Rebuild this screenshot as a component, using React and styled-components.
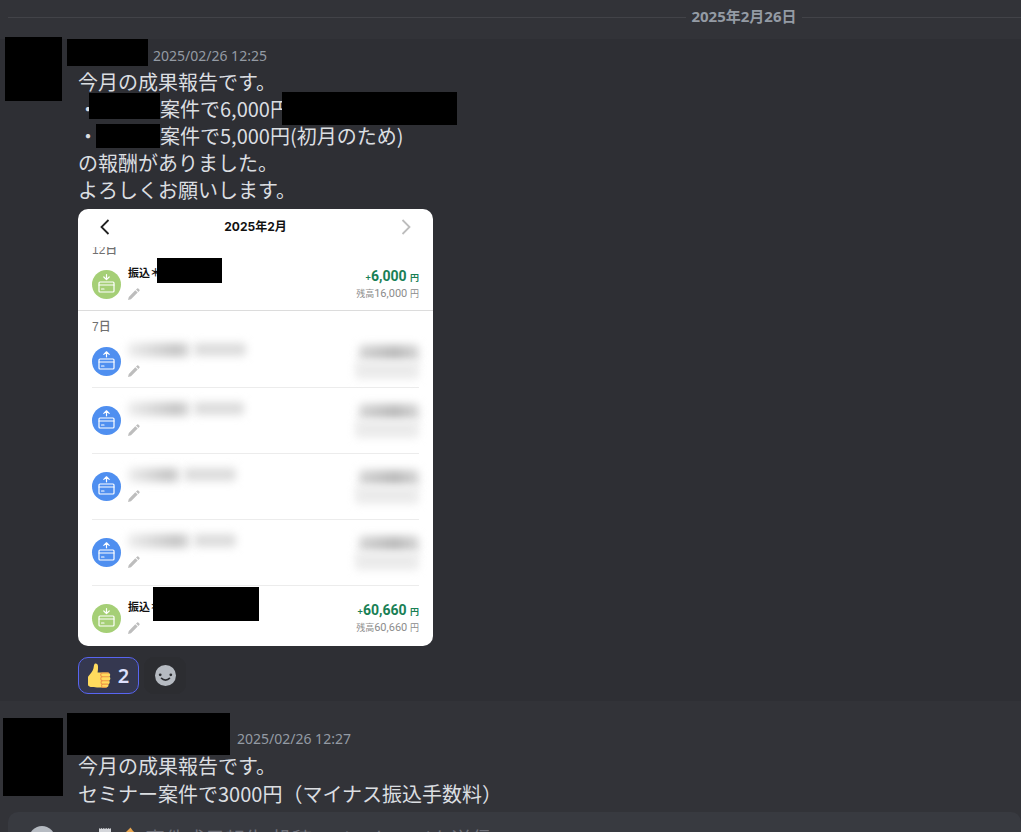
import React from "react";
import styled, { createGlobalStyle } from "styled-components";

const GlobalStyle = createGlobalStyle`
  *, *::before, *::after { box-sizing: border-box; }
  body {
    margin: 0;
    background: #323338;
    color: #dbdee1;
    font-family: "Noto Sans CJK JP", "Noto Sans", sans-serif;
    overflow: hidden;
  }
  p, h2, h3, ul { margin: 0; padding: 0; font-weight: inherit; }
  ul { list-style: none; }
`;

const Page = styled.div`
  height: 100vh;
  overflow: hidden;
`;

const Feed = styled.main`
  height: calc(100vh - 20px);
  overflow: hidden;
`;

const DateDivider = styled.div`
  display: flex;
  align-items: center;
  height: 39px;
  padding: 0 0 5px 8px;
`;

const Rule = styled.span`
  flex: ${(p) => p.$share} 1 0;
  height: 1px;
  background: #424348;
`;

const DividerDate = styled.time`
  padding: 0 5px 2px;
  color: #949ba4;
  font: 700 15px/20px "Noto Sans", "Noto Sans CJK JP", sans-serif;
`;

const Message = styled.article`
  position: relative;
  padding: 0 16px 7px 78px;
  background: ${(p) => (p.$active ? "#2e2f34" : "transparent")};
  margin-top: ${(p) => p.$gap || 0}px;
`;

const Avatar = styled.span`
  position: absolute;
  left: ${(p) => p.$left}px;
  top: ${(p) => p.$top}px;
  width: ${(p) => p.$w}px;
  height: ${(p) => p.$h}px;
  background: #000;
`;

const MessageHeader = styled.header`
  display: flex;
  align-items: flex-end;
  gap: ${(p) => p.$gap}px;
  height: ${(p) => p.$h}px;
  margin-left: -11px;
`;

const Redacted = styled.span`
  display: block;
  flex: none;
  align-self: ${(p) => p.$align || "center"};
  width: ${(p) => p.$w}px;
  height: ${(p) => p.$h}px;
  margin: ${(p) => p.$m || "0"};
  background: #000;
  position: relative;
`;

const Timestamp = styled.time`
  padding-bottom: 2px;
  color: #949ba4;
  font: 400 14px/20px "Noto Sans", sans-serif;
`;

const Line = styled.p`
  display: flex;
  align-items: center;
  height: ${(p) => (p.$loose ? 28 : 27)}px;
  font-size: 20px;
  line-height: 27px;
  white-space: nowrap;
`;

const Attachment = styled.section`
  width: 355px;
  max-width: 100%;
  margin-top: 6px;
  border-radius: 10px;
  overflow: hidden;
  background: #fff;
  color: #111;
`;

const MonthBar = styled.header`
  display: flex;
  align-items: center;
  justify-content: space-between;
  height: 38px;
  padding: 0 22px 3px;
`;

const MonthTitle = styled.h2`
  font: 700 12px/18px Inter, "Noto Sans CJK JP", sans-serif;
`;

const IconButton = styled.button`
  display: flex;
  padding: 0;
  border: 0;
  background: none;
  color: ${(p) => (p.$muted ? "#bdbdbd" : "#222")};
`;

const DayLabel = styled.h3`
  display: flex;
  align-items: ${(p) => (p.$cut ? "flex-end" : "center")};
  height: ${(p) => (p.$cut ? 9 : 16)}px;
  margin: ${(p) => (p.$cut ? "0 14px -4px" : "8px 14px -6px")};
  overflow: hidden;
  color: #707070;
  font: 500 12px/${(p) => (p.$cut ? 12 : 16)}px "Liberation Sans", "Noto Sans CJK JP", sans-serif;
`;

const DayList = styled.ul`
  padding: 0 14px;
  border-bottom: ${(p) => (p.$ruled ? "1px solid #dcdcdc" : "0")};
`;

const Entry = styled.li`
  display: flex;
  align-items: center;
  gap: 7px;
  padding: 18px 0 ${(p) => p.$below}px;
  border-bottom: ${(p) => (p.$last ? "0" : "1px solid #ececec")};
`;

const Badge = styled.span`
  display: flex;
  flex: none;
  width: 29px;
  height: 29px;
  border-radius: 50%;
  background: ${(p) => (p.$incoming ? "#a5cf76" : "#4f8ff0")};
`;

const Details = styled.div`
  display: flex;
  flex-direction: column;
  justify-content: space-between;
  flex: 1;
  height: 35px;
  margin: -5px 0 -1px;
`;

const Payee = styled.div`
  display: flex;
  align-items: center;
  height: 15px;
  font: 700 11px/15px "Noto Sans CJK JP", sans-serif;
`;

const Amounts = styled.div`
  display: flex;
  flex-direction: column;
  align-items: flex-end;
  margin: -3px 0;
`;

const Amount = styled.strong`
  color: #188055;
  font: 700 14px/18px Roboto, sans-serif;
  small { font: 700 9px/9px "Noto Sans CJK JP", sans-serif; }
`;

const Balance = styled.span`
  color: #8c8c8c;
  font: 400 11px/17px Roboto, sans-serif;
  small { font: 400 9px/9px "Noto Sans CJK JP", sans-serif; }
`;

const Smudge = styled.span`
  display: block;
  width: ${(p) => p.$w}px;
  height: ${(p) => p.$h}px;
  margin-left: ${(p) => p.$x || 0}px;
  background: ${(p) => p.$tone};
  border-radius: 4px;
  filter: blur(4px);
`;

const Reactions = styled.div`
  display: flex;
  gap: 5px;
  margin-top: 11px;
`;

const Reaction = styled.button`
  display: flex;
  align-items: center;
  justify-content: center;
  gap: 7px;
  width: ${(p) => (p.$mine ? 61 : 42)}px;
  height: 37px;
  padding: 0;
  border: 1px solid ${(p) => (p.$mine ? "#5865f2" : "#2c2d31")};
  border-radius: 10px;
  background: ${(p) => (p.$mine ? "#353850" : "#2c2d31")};
  color: #dee0fc;
  font: 600 20px/24px "Noto Sans", sans-serif;
`;

const Composer = styled.form`
  display: flex;
  align-items: center;
  gap: 42px;
  height: 54px;
  margin: 0 0 0 8px;
  padding: 0 16px 0 21px;
  border-radius: 10px 10px 0 0;
  background: #383a40;
`;

const Attach = styled.button`
  display: flex;
  flex: none;
  padding: 0;
  border: 0;
  background: none;
`;

const Field = styled.label`
  display: flex;
  align-items: center;
  flex: 1;
  gap: 4px;
`;

const MessageInput = styled.input`
  flex: 1;
  min-width: 0;
  padding: 0;
  border: 0;
  outline: 0;
  background: none;
  color: #dbdee1;
  font: 400 20px/28px "Noto Sans CJK JP", sans-serif;
  &::placeholder { color: #6d6f78; opacity: 1; }
`;

const Chevron = ({ back }) => (
  <svg width="10" height="16" viewBox="0 0 10 16" fill="none" stroke="currentColor" strokeWidth="1.8">
    <path d={back ? "M8.5 1 1.5 8l7 7" : "M1.5 1l7 7-7 7"} />
  </svg>
);

const CardIcon = ({ incoming }) => (
  <svg width="29" height="29" viewBox="0 0 29 29" fill="none" stroke="#fff" strokeWidth="1.2" strokeLinecap="round" strokeLinejoin="round">
    <path d={incoming ? "M14.5 4.5v5M11.8 7l2.7 2.6L17.2 7" : "M14.5 9.8V5M11.8 7.4l2.7-2.6 2.7 2.6"} />
    <rect x="7" y="12" width="15" height="10" rx="1" />
    <path d="M7 15h15M9.5 19h2.5" />
  </svg>
);

const Pencil = () => (
  <svg width="12" height="12" viewBox="0 0 12 12" fill="#bdbdbd">
    <path d="M0 12 .8 9 7.300 2.300 9.700 4.600 3 11.200zM8 1.600 9.200.5q.5-.5 1.100 0l1.200 1.200q.5.500 0 1L10.400 3.900z" />
  </svg>
);

const ThumbsUp = () => (
  <svg width="23" height="25" viewBox="0 0 24 26">
    <path fill="#ffdb5e" d="M7 .8c1.8-.7 3.2.3 3.4 2.2.2 2.5 0 4.6-.4 6.8h10.5a2.6 2.6 0 0 1 1.9 4.4 2.6 2.6 0 0 1-.3 4.2 2.5 2.5 0 0 1-.9 3.800c.6 1.800-.6 3.200-2.500 3.200H9.500C4 25.400 0 25.400 0 22.500V15c0-1.500 3-3.600 5-7.500C6.500 5 5.600 2 7 .8z" />
    <path fill="none" stroke="#ee9547" strokeWidth="1.100" strokeLinecap="round" d="M21.500 14.300h-6c-1.500 0-2.300-.7-2.300-2s.8-2 2.300-2h6M21.500 18.400h-6c-1.500 0-2.200-.8-2.200-2s.7-2 2.200-2M20.800 22h-5c-1.500 0-2.200-.7-2.200-1.800s.7-1.800 2.200-1.800M19 25.200h-3c-1.200 0-1.900-.6-1.900-1.600s.7-1.600 1.900-1.600" />
  </svg>
);

const Smiley = () => (
  <svg width="21" height="21" viewBox="0 0 21 21">
    <circle cx="10.500" cy="10.500" r="10.500" fill="#b5bac1" />
    <circle cx="5.200" cy="9.800" r="1.400" fill="#2c2d31" />
    <circle cx="15.800" cy="9.800" r="1.400" fill="#2c2d31" />
    <path d="M6.500 13.300c2 2.400 6 2.400 8 0" fill="none" stroke="#2c2d31" strokeWidth="1.700" strokeLinecap="round" />
  </svg>
);

const ChannelEmoji = () => (
  <svg width="44" height="26" viewBox="0 0 44 26">
    <path fill="#d3d5d9" d="M2 2l1.200 1L4.400 2l1.200 1 1.200-1L8 3l1.200-1 1.200 1 1.200-1 1.200 1L14 2v22H2z" />
    <path fill="#e8a650" d="M33.500 1.500 36 5l4 3-3 14h-8l-3-13 4-4z" />
  </svg>
);

const outgoing = [
  { below: 11, a: 62, b: 52 },
  { below: 18, a: 62, b: 50 },
  { below: 18, a: 52, b: 52 },
  { below: 18, a: 62, b: 42 },
];

function Deposit({ amount, balance, below, box }) {
  return (
    <Entry $below={below} $last>
      <Badge $incoming><CardIcon incoming /></Badge>
      <Details>
        <Payee>振込＊{box}</Payee>
        <Pencil />
      </Details>
      <Amounts>
        <Amount><small>+</small>{amount} <small>円</small></Amount>
        <Balance><small>残高</small>{balance} <small>円</small></Balance>
      </Amounts>
    </Entry>
  );
}

function Statement() {
  return (
    <Attachment>
      <MonthBar>
        <IconButton type="button" aria-label="前の月"><Chevron back /></IconButton>
        <MonthTitle>2025年2月</MonthTitle>
        <IconButton type="button" aria-label="次の月" $muted><Chevron /></IconButton>
      </MonthBar>
      <DayLabel $cut>12日</DayLabel>
      <DayList $ruled>
        <Deposit amount="6,000" balance="16,000" below={11} box={<Redacted $w={65} $h={25} $m="-5px 0 0 -4px" />} />
      </DayList>
      <DayLabel>7日</DayLabel>
      <DayList>
        {outgoing.map((row, i) => (
          <Entry key={i} $below={row.below}>
            <Badge><CardIcon /></Badge>
            <Details>
              <Payee>
                <Smudge $w={row.a} $h={14} $tone="linear-gradient(90deg, #ededed, #c4c4c4 80%, #dedede)" />
                <Smudge $w={row.b} $h={13} $x={4} $tone="#dcdcdc" />
              </Payee>
              <Pencil />
            </Details>
            <Amounts>
              <Smudge $w={60} $h={16} $tone="linear-gradient(90deg, #d6d6d6, #bbb 60%, #d6d6d6)" />
              <Smudge $w={64} $h={18} $tone="#ebebeb" />
            </Amounts>
          </Entry>
        ))}
        <Deposit amount="60,660" balance="60,660" below={13} box={<Redacted $w={106} $h={34} $m="-5px 0 0 -8px" />} />
      </DayList>
    </Attachment>
  );
}

export default function App() {
  return (
    <Page>
      <GlobalStyle />
      <Feed>
        <DateDivider>
          <Rule $share={68} />
          <DividerDate>2025年2月26日</DividerDate>
          <Rule $share={22} />
        </DateDivider>

        <Message $active>
          <Avatar $left={5} $top={-2} $w={57} $h={64} />
          <MessageHeader $h={29} $gap={5}>
            <Redacted $w={81} $h={27} $align="flex-start" />
            <Timestamp>2025/02/26 12:25</Timestamp>
          </MessageHeader>
          <Line>今月の成果報告です。</Line>
          <Line>
            ・<Redacted $w={71} $h={26} $m="-5px 0 0 -9px" />案件で6,000円
            <Redacted $w={175} $h={33} $m="0 0 0 -8px" />
          </Line>
          <Line>・<Redacted $w={64} $h={24} $m="0 0 0 -2px" />案件で5,000円(初月のため)</Line>
          <Line>の報酬がありました。</Line>
          <Line>よろしくお願いします。</Line>
          <Statement />
          <Reactions>
            <Reaction type="button" $mine><ThumbsUp />2</Reaction>
            <Reaction type="button" aria-label="リアクションを付ける"><Smiley /></Reaction>
          </Reactions>
        </Message>

        <Message $gap={12}>
          <Avatar $left={3} $top={5} $w={60} $h={78} />
          <MessageHeader $h={38} $gap={7}>
            <Redacted $w={163} $h={42} $align="flex-start" />
            <Timestamp>2025/02/26 12:27</Timestamp>
          </MessageHeader>
          <Line $loose>今月の成果報告です。</Line>
          <Line $loose>セミナー案件で3000円（マイナス振込手数料）</Line>
          <Line $loose>の報酬がありました。</Line>
        </Message>
      </Feed>

      <Composer>
        <Attach type="button" aria-label="ファイルを添付">
          <svg width="26" height="26" viewBox="0 0 26 26">
            <circle cx="13" cy="13" r="13" fill="#b5bac1" />
            <path d="M13 7v12M7 13h12" stroke="#383a40" strokeWidth="2.500" />
          </svg>
        </Attach>
        <Field>
          <ChannelEmoji />
          <MessageInput aria-label="メッセージ" placeholder="案件成果報告-投稿へメッセージを送信" />
        </Field>
      </Composer>
    </Page>
  );
}
